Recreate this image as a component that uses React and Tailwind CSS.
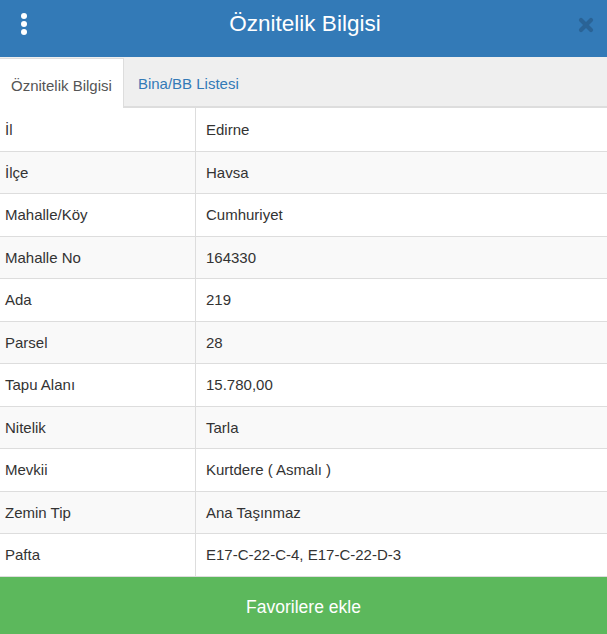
const rows = [
  ["İl", "Edirne"],
  ["İlçe", "Havsa"],
  ["Mahalle/Köy", "Cumhuriyet"],
  ["Mahalle No", "164330"],
  ["Ada", "219"],
  ["Parsel", "28"],
  ["Tapu Alanı", "15.780,00"],
  ["Nitelik", "Tarla"],
  ["Mevkii", "Kurtdere ( Asmalı )"],
  ["Zemin Tip", "Ana Taşınmaz"],
  ["Pafta", "E17-C-22-C-4, E17-C-22-D-3"],
];

const App = () => {
  return (
    <div className="w-[607px] h-[634px] flex flex-col bg-white text-[#333] font-['Liberation_Sans',Arial,sans-serif]">
      {/* header */}
      <div className="h-[57px] shrink-0 bg-[#337ab7] flex items-center justify-between px-[21px]">
        <div className="flex flex-col gap-[2px] w-[6px] -mt-[9px]">
          <span className="w-[6px] h-[6px] rounded-full bg-white" />
          <span className="w-[6px] h-[6px] rounded-full bg-white" />
          <span className="w-[6px] h-[6px] rounded-full bg-white" />
        </div>
        <h1 className="text-white text-[22.5px] leading-none -mt-[9px] ml-[5px]">Öznitelik Bilgisi</h1>
        <svg width="16" height="16" viewBox="0 0 16 16" className="-mt-[7px] -mr-[8px]">
          <path d="M3 3 L13 13 M13 3 L3 13" stroke="#2a6396" strokeWidth="4.2" strokeLinecap="round" />
        </svg>
      </div>

      {/* tabs */}
      <div className="h-[51px] shrink-0 bg-[#efefef] border-b-2 border-[#dddddd] flex items-end">
        <div className="h-[50px] -mb-[2px] px-[11px] pt-[5px] bg-white border-t border-r border-[#dddddd] flex items-center text-[15px] text-[#555]">
          Öznitelik Bilgisi
        </div>
        <div className="h-[48px] pl-[14px] pt-[5px] flex items-center text-[15px] text-[#337ab7]">Bina/BB Listesi</div>
      </div>

      {/* table */}
      <div className="flex flex-col">
        {rows.map(([k, v], i) => (
          <div
            key={k}
            className={`h-[42.5px] flex text-[15px] ${i > 0 ? "border-t border-[#dddddd]" : ""} ${i % 2 === 1 ? "bg-[#f9f9f9]" : "bg-white"}`}
          >
            <div className="w-[196px] shrink-0 pl-[5px] pt-px border-r border-[#dddddd] flex items-center">{k}</div>
            <div className="pl-[10px] pt-px flex items-center">{v}</div>
          </div>
        ))}
      </div>

      {/* footer button */}
      <button className="mt-auto h-[58px] shrink-0 pt-[3px] bg-[#5cb85c] text-white text-[17.5px] border-t border-[#dddddd]">
        Favorilere ekle
      </button>
    </div>
  );
};

export default App;
